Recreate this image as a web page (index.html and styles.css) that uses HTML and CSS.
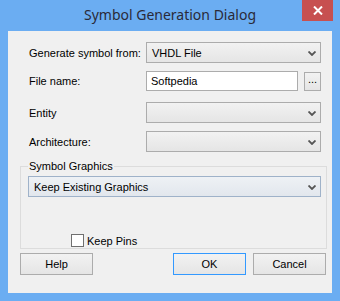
FILE: index.html
```html
<!DOCTYPE html>
<html lang="en">
<head>
  <meta charset="UTF-8">
  <title>Symbol Generation Dialog</title>
  <link rel="stylesheet" href="styles.css">
</head>
<body>
  <div class="window">
    <div class="titlebar">
      <span class="title">Symbol Generation Dialog</span>
      <span class="close"><svg width="10" height="9" viewBox="0 0 10 9"><path d="M1 0.5 L9 8.5 M9 0.5 L1 8.5" stroke="#fff" stroke-width="2"/></svg></span>
    </div>

    <div class="client">
      <div class="row row-first">
        <label>Generate symbol from:</label>
        <div class="combo"><span>VHDL File</span><svg class="chev" width="8" height="5" viewBox="0 0 8 5"><path d="M0.5 0.5 L4 4 L7.5 0.5" stroke="#555" stroke-width="1.8" fill="none"/></svg></div>
      </div>

      <div class="row row-file">
        <label>File name:</label>
        <div class="file">
          <input type="text" value="Softpedia">
          <button class="browse">...</button>
        </div>
      </div>

      <div class="row row-entity">
        <label>Entity</label>
        <div class="combo"><span></span><svg class="chev" width="8" height="5" viewBox="0 0 8 5"><path d="M0.5 0.5 L4 4 L7.5 0.5" stroke="#555" stroke-width="1.8" fill="none"/></svg></div>
      </div>

      <div class="row row-arch">
        <label>Architecture:</label>
        <div class="combo"><span></span><svg class="chev" width="8" height="5" viewBox="0 0 8 5"><path d="M0.5 0.5 L4 4 L7.5 0.5" stroke="#555" stroke-width="1.8" fill="none"/></svg></div>
      </div>

      <fieldset class="group">
        <legend>Symbol Graphics</legend>
        <div class="combo combo-focus"><span>Keep Existing Graphics</span><svg class="chev" width="8" height="5" viewBox="0 0 8 5"><path d="M0.5 0.5 L4 4 L7.5 0.5" stroke="#555" stroke-width="1.8" fill="none"/></svg></div>
        <div class="check"><span class="box"></span><span>Keep Pins</span></div>
      </fieldset>

      <div class="buttons">
        <button class="btn">Help</button>
        <div class="right">
          <button class="btn btn-default">OK</button>
          <button class="btn">Cancel</button>
        </div>
      </div>
    </div>
  </div>
</body>
</html>
```

FILE: styles.css
```css
body {margin: 0; background: #6badf2; font: 11px 'Liberation Sans', Arial, sans-serif; color: #000;}
.window {width: 340px; height: 301px; background: #6badf2; display: flex; flex-direction: column;}

.titlebar {height: 31px; position: relative; display: flex; justify-content: center; align-items: center;}
.title {font: 14px 'Noto Sans', sans-serif; color: #2a2a38; margin-top: -2px;}
.close {position: absolute; top: 0; right: 7px; width: 31px; height: 21px; background: #c75050; display: flex; align-items: center; justify-content: center;}

.client {flex: 1; margin: 0 8px 8px; background: #f0f0f0; padding: 11px 11px 0 12px; display: flex; flex-direction: column;}

.row {display: flex; align-items: center;}
.row label {width: 117px; padding-left: 9px;}
.row .combo, .row .file {flex: 1;}
.row-file {margin-top: 8px;}
.row-entity {margin-top: 11px;}
.row-arch {margin-top: 8px;}

.combo {height: 21px; box-sizing: border-box; border: 1px solid #acacac; background: linear-gradient(#f2f2f2, #e5e5e5); display: flex; align-items: center; justify-content: space-between; padding: 0 4px 0 5px;}
.combo-focus {border-color: #9fb2c9; background: linear-gradient(#eef1f5, #e2e7ed);}
.chev {margin-top: 1px;}

.file {display: flex; gap: 6px; align-items: center;}
.file input {flex: 1; min-width: 0; height: 20px; box-sizing: border-box; margin: 0; border: 1px solid #acacac; padding: 0 4px; font: 11px 'Liberation Sans', Arial, sans-serif; background: #fff; outline: 0;}
.browse {width: 17px; height: 19px; margin: 0; padding: 0 0 5px; border: 1px solid #acacac; background: linear-gradient(#f2f2f2, #e5e5e5); font: 11px 'Liberation Sans', Arial, sans-serif;}

.group {margin: 8px -6px 0 0; padding: 4px 5px 6px 7px; height: 89px; box-sizing: border-box; border: 1px solid #dcdcdc; display: flex; flex-direction: column;}
.group legend {padding: 0 1px; margin-left: 0; font: 11px 'Liberation Sans', Arial, sans-serif;}
.check {display: flex; align-items: center; gap: 3px; margin: 37px 0 0 43px;}
.box {width: 11px; height: 11px; border: 1px solid #707070; background: #fff;}

.buttons {display: flex; justify-content: space-between; margin: 4px -5px 0 0;}
.right {display: flex; gap: 7px;}
.btn {width: 73px; height: 22px; margin: 0; padding: 0; border: 1px solid #acacac; background: linear-gradient(#f2f2f2, #e5e5e5); font: 11px 'Liberation Sans', Arial, sans-serif; color: #000;}
.btn-default {border-color: #3399ff;}
```
